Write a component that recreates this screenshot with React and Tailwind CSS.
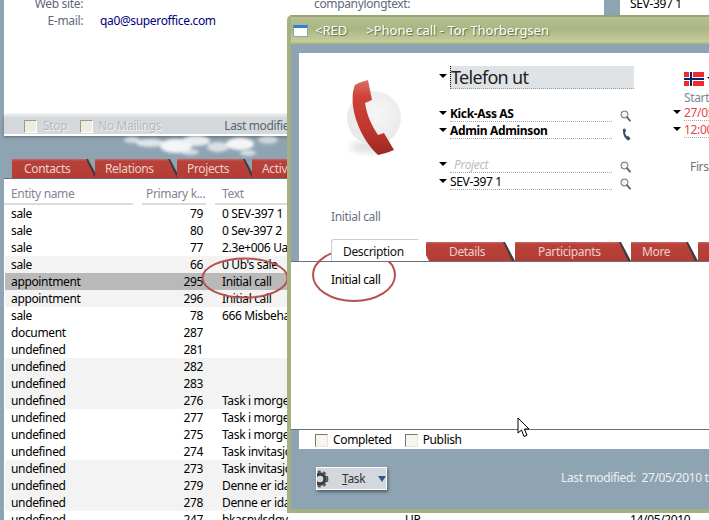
import React from "react";

const rows = [
  ["sale", "79", "0 SEV-397 1", "white"],
  ["sale", "80", "0 Sev-397 2", "white"],
  ["sale", "77", "2.3e+006 Ua", "white"],
  ["sale", "66", "0 Ub's sale", "gray"],
  ["appointment", "295", "Initial call", "sel"],
  ["appointment", "296", "Initial call", "gray"],
  ["sale", "78", "666 Misbehav", "white"],
  ["document", "287", "", "white"],
  ["undefined", "281", "", "white"],
  ["undefined", "282", "", "gray"],
  ["undefined", "283", "", "gray"],
  ["undefined", "276", "Task i morgen", "gray"],
  ["undefined", "277", "Task i morgen", "white"],
  ["undefined", "275", "Task i morgen", "white"],
  ["undefined", "274", "Task invitasjon", "white"],
  ["undefined", "273", "Task invitasjon", "gray"],
  ["undefined", "279", "Denne er ida", "gray"],
  ["undefined", "278", "Denne er ida", "gray"],
  ["undefined", "247", "bkasnylsdgv", "white", "UP", "14/05/2010"],
];

const rowBg = { white: "bg-white", gray: "bg-[#f3f3f3]", sel: "bg-[#b9b9b9]" };

// Red tab with a slanted right edge and a dark sliver behind the slant
const Tab = ({ label, width, pad, height = "h-[19px]" }) => (
  <div
    className={`${height} shrink-0 bg-[#3f3a3c] [clip-path:polygon(0_0,calc(100%-10px)_0,100%_100%,0_100%)]`}
    style={{ width }}
  >
    <div
      className="h-full bg-[linear-gradient(#c9665f,#b8423b_12%,#b43c35)] text-[#ecd0c9] text-[12px] leading-[19px] [clip-path:polygon(0_0,calc(100%-12px)_0,calc(100%-3px)_100%,0_100%)]"
      style={{ paddingLeft: pad }}
    >
      {label}
    </div>
  </div>
);

const Arrow = () => (
  <span className="shrink-0 w-0 h-0 border-x-[4px] border-x-transparent border-t-[4px] border-t-black mr-[3px] mt-[5px]" />
);

const Magnifier = () => (
  <svg width="11" height="12" viewBox="0 0 11 12" className="ml-[8px] mt-[4px] shrink-0">
    <circle cx="4.5" cy="4.5" r="3.4" fill="#f4f4f4" stroke="#8d8d8d" strokeWidth="1.2" />
    <path d="M7 7.2 L10 10.6" stroke="#6a6a6a" strokeWidth="2" strokeLinecap="round" />
  </svg>
);

const SmallPhone = () => (
  <svg width="9" height="13" viewBox="0 0 9 13" className="ml-[10px] mt-[5px] shrink-0">
    <path
      d="M1 1 L3.4 0.4 L4 3.6 L3 4.2 C3.3 6 4 7.4 5 8.4 L6.2 7.8 L8.6 10.8 L6.4 12.4 C3.6 11.6 0.4 7 1 1 Z"
      fill="#34506a"
    />
  </svg>
);

const Field = ({ children, className = "", icon }) => (
  <div className="flex items-start h-[17px]">
    <Arrow />
    <div className={`w-[162px] h-[16px] leading-[16px] text-[12px] border-b border-dotted border-[#a9a9a9] ${className}`}>
      {children}
    </div>
    {icon}
  </div>
);

const Check = ({ disabled }) => (
  <span
    className={`block w-[13px] h-[13px] border shrink-0 ${
      disabled
        ? "bg-[#eeecdf] border-t-[#9a9a90] border-l-[#9a9a90] border-r-white border-b-white"
        : "bg-[#f7f6ee] border-t-[#77776d] border-l-[#77776d] border-r-[#e5e5dc] border-b-[#e5e5dc]"
    }`}
  />
);

const Clouds = () => (
  <svg width="290" height="23" viewBox="0 0 290 23" className="block">
    <defs>
      <filter id="cloudBlur" x="-20%" y="-50%" width="140%" height="200%">
        <feGaussianBlur stdDeviation="1.6" />
      </filter>
    </defs>
    <g fill="#f3f5f6" filter="url(#cloudBlur)">
      <ellipse cx="132" cy="4" rx="8" ry="3" opacity="0.7" />
      <ellipse cx="150" cy="7" rx="14" ry="4" opacity="0.8" />
      <ellipse cx="176" cy="10" rx="16" ry="7" />
      <ellipse cx="196" cy="5" rx="14" ry="5" opacity="0.9" />
      <ellipse cx="190" cy="16" rx="9" ry="3" opacity="0.7" />
      <ellipse cx="218" cy="11" rx="11" ry="5" opacity="0.75" />
      <ellipse cx="240" cy="8" rx="14" ry="6" />
      <ellipse cx="248" cy="17" rx="8" ry="3" opacity="0.7" />
      <ellipse cx="268" cy="4" rx="10" ry="4" opacity="0.6" />
    </g>
  </svg>
);

const PhoneLogo = () => (
  <svg width="80" height="100" viewBox="0 0 80 100" className="block -ml-px">
    <defs>
      <linearGradient id="handset" x1="0" y1="0" x2="0" y2="1">
        <stop offset="0" stopColor="#dc6f66" />
        <stop offset="0.22" stopColor="#cf4238" />
        <stop offset="0.7" stopColor="#bc352d" />
        <stop offset="1" stopColor="#982824" />
      </linearGradient>
      <radialGradient id="ball" cx="0.55" cy="0.4" r="0.7">
        <stop offset="0" stopColor="#f6f6f6" />
        <stop offset="1" stopColor="#e6e6e6" />
      </radialGradient>
      <filter id="soft" x="-30%" y="-30%" width="160%" height="160%">
        <feGaussianBlur stdDeviation="3" />
      </filter>
    </defs>
    <ellipse cx="40" cy="77" rx="20" ry="6" fill="#bbb" opacity="0.45" filter="url(#soft)" />
    <circle cx="44" cy="48" r="27" fill="url(#ball)" />
    <path
      d="M25 15 C28 13 34 11 38 10 L42 30 L35 33 C37 46 42 56 48 65 L54 63 L64 80 C59 82 53 84 48 85 C38 76 28 60 24 42 C22 32 22 22 25 15 Z"
      fill="url(#handset)"
    />
  </svg>
);

const App = () => {
  return (
    <div className="relative w-[709px] h-[520px] overflow-hidden bg-[#8fa4b3] text-[12px] tracking-[-0.35px] text-black [font-family:'Noto_Sans',sans-serif]">
      {/* Main window behind the dialog */}
      <div className="flex h-[136px]">
        <div className="ml-[4px] w-[600px] flex flex-col">
          <div className="h-[115px] bg-white flex flex-col">
            <div className="flex gap-[17px] h-[17px] leading-[17px] -mt-[5px] shrink-0">
              <span className="w-[79px] text-right text-[#5f6878]">Web site:</span>
              <span className="pl-[214px] text-[#5f6878] whitespace-nowrap">companylongtext:</span>
            </div>
            <div className="flex gap-[17px] h-[17px] leading-[17px] shrink-0">
              <span className="w-[79px] text-right text-[#5f6878]">E-mail:</span>
              <span className="text-[#000080]">qa0@superoffice.com</span>
            </div>
          </div>
          <div className="h-[21px] border-t-2 border-[#e2e4e6] border-b-2 border-b-white bg-[#d3d8dc] flex items-center pt-px shadow-[0_1px_3px_#5f6b75]">
            <div className="ml-[20px]"><Check disabled /></div>
            <span className="ml-[6px] text-[#b6b9bb] [text-shadow:1px_1px_0_#f2f3f4]">Stop</span>
            <div className="ml-[13px]"><Check disabled /></div>
            <span className="ml-[5px] text-[#b6b9bb] [text-shadow:1px_1px_0_#f2f3f4]">No Mailings</span>
            <span className="ml-[63px] text-[#5b6570]">Last modified:</span>
          </div>
        </div>
        <div className="ml-[16px] flex-1 bg-white flex flex-col pl-[10px]">
          <div className="h-[17px] leading-[17px] -mt-[5px] shrink-0">SEV-397 1</div>
        </div>
      </div>

      <Clouds />

      <div className="flex ml-[12px] h-[19px]">
        <Tab label="Contacts" width={86} pad={12} />
        <div className="-ml-[3px]"><Tab label="Relations" width={85} pad={10} /></div>
        <div className="-ml-[3px]"><Tab label="Projects" width={78} pad={10} /></div>
        <div className="-ml-[3px]"><Tab label="Activities" width={90} pad={10} /></div>
      </div>

      {/* Entity list */}
      <div className="ml-[4px] bg-white border-t border-[#5f6f80] h-[400px]">
        <div className="grid grid-cols-[129px_64px_181px_216px_1fr] gap-x-[9px] h-[26px] text-[#7d8791]">
          <div className="pl-[7px] pt-[6px] border-b-2 border-[#dcdcdc]">Entity name</div>
          <div className="pl-[4px] pt-[6px] border-b-2 border-[#dcdcdc] whitespace-nowrap">Primary k...</div>
          <div className="pl-[7px] pt-[6px] border-b-2 border-[#dcdcdc]">Text</div>
        </div>
        {rows.map(([name, key, text, tone, extra, date], i) => (
          <div
            key={i}
            className={`ml-px grid grid-cols-[128px_64px_181px_216px_1fr] gap-x-[9px] h-[17px] leading-[17px] ${rowBg[tone]}`}
          >
            <div className="pl-[6px]">{name}</div>
            <div className="text-right pr-[3px]">{key}</div>
            <div className="pl-[7px] whitespace-nowrap overflow-hidden">{text}</div>
            <div>{extra}</div>
            <div>{date}</div>
          </div>
        ))}
      </div>

      {/* Highlight around the selected row */}
      <svg width="90" height="44" viewBox="0 0 90 44" className="absolute left-[200px] top-[256px]">
        <ellipse cx="45" cy="22" rx="42.5" ry="19.5" fill="none" stroke="#b5524e" strokeWidth="2" />
      </svg>

      {/* Phone call dialog */}
      <div className="absolute left-[287px] top-[15px] w-[440px] h-[498px] flex flex-col rounded-t-[5px] overflow-hidden border-x-4 border-b-4 border-[#a3b07f] border-t-2 border-t-[#97a574]">
        <div className="h-[27px] shrink-0 flex items-center pt-px bg-[linear-gradient(#b5c092,#a9b683_45%,#c4cd9b_90%,#a7b37f)] text-white [text-shadow:1px_1px_1px_#5d6a40] text-[13px] tracking-normal">
          <span className="ml-[2px] w-[15px] h-[12px] bg-white border border-[#8aa] border-t-[3px] border-t-[#2f7fd6]" />
          <span className="ml-[7px]">&lt;RED</span>
          <span className="ml-[19px]">&gt;Phone call - Tor Thorbergsen</span>
        </div>

        <div className="flex-1 flex flex-col bg-[#8fa4b3]">
          <div className="mt-[9px] ml-[8px] h-[208px] bg-white flex flex-col shrink-0">
            <div className="flex h-[186px]">
              <div className="w-[140px] shrink-0 pl-[32px] pt-[17px]">
                <PhoneLogo />
                <div className="mt-[39px] leading-[16px] text-[#6a7280]">Initial call</div>
              </div>

              <div className="w-[195px] shrink-0 pt-[13px]">
                <div className="flex items-start">
                  <span className="shrink-0 w-0 h-0 border-x-[4px] border-x-transparent border-t-[4px] border-t-black mr-[3px] mt-[8px]" />
                  <div className="w-[184px] h-[23px] bg-[#dfe3e6] border-b border-dotted border-[#9a9a9a] border-l border-l-black text-[18px] leading-[23px] tracking-[-0.7px] text-[#222]">
                    Telefon ut
                  </div>
                </div>
                <div className="mt-[17px]">
                  <Field className="font-bold" icon={<Magnifier />}>Kick-Ass AS</Field>
                  <Field className="font-bold" icon={<SmallPhone />}>Admin Adminson</Field>
                </div>
                <div className="mt-[17px]">
                  <Field className="italic text-[#bcbcbc] pl-[4px]" icon={<Magnifier />}>Project</Field>
                  <Field icon={<Magnifier />}>SEV-397 1</Field>
                </div>
              </div>

              <div className="ml-[39px] pt-[19px] w-[120px] shrink-0">
                <div className="flex ml-[11px]">
                  <svg width="20" height="14" viewBox="0 0 20 14" className="block shrink-0">
                    <rect width="20" height="14" fill="#ef2b2d" />
                    <rect x="5" width="4" height="14" fill="#fff" />
                    <rect y="5" width="20" height="4" fill="#fff" />
                    <rect x="6" width="2" height="14" fill="#002868" />
                    <rect y="6" width="20" height="2" fill="#002868" />
                  </svg>
                  <span className="ml-[3px] w-0 h-0 border-x-[4px] border-x-transparent border-t-[4px] border-t-black mt-[5px]" />
                </div>
                <div className="ml-[11px] mt-[4px] h-[15px] leading-[15px] text-[#7d8791]">Start</div>
                <div className="flex h-[17px]">
                  <Arrow />
                  <div className="text-[#e8424a] border-b border-dotted border-[#a9a9a9] h-[16px] leading-[16px] flex-1">27/05/2010</div>
                </div>
                <div className="flex h-[17px]">
                  <Arrow />
                  <div className="text-[#e8424a] border-b border-dotted border-[#a9a9a9] h-[16px] leading-[16px] flex-1">12:00</div>
                </div>
                <div className="ml-[17px] mt-[19px] text-[#6a7280]">First</div>
              </div>
            </div>

            <div className="flex items-end ml-[32px] h-[22px]">
              <div className="relative z-10 shrink-0 w-[98px] h-[22px] bg-white border-t border-l border-[#c8cdd2] rounded-tl-[3px] [clip-path:polygon(0_0,87px_0,100%_100%,0_100%)] pl-[11px] leading-[24px] text-[#111]">
                Description
              </div>
              <div className="-ml-[3px]"><Tab label="Details" width={89} pad={23} /></div>
              <div><Tab label="Participants" width={116} pad={23} /></div>
              <div><Tab label="More" width={67} pad={11} /></div>
              <div><Tab label="" width={60} pad={10} /></div>
            </div>
          </div>

          <div className="h-[168px] shrink-0 bg-white border-t border-[#66717f] pl-[40px] pt-[9px] leading-[17px]">
            Initial call
          </div>

          <div className="border-t border-[#66717f] ml-0 shrink-0">
            <div className="ml-[8px] h-[19px] bg-white flex items-center pt-px">
              <div className="ml-[16px]"><Check /></div>
              <span className="ml-[5px]">Completed</span>
              <div className="ml-[13px]"><Check /></div>
              <span className="ml-[5px]">Publish</span>
            </div>
          </div>

          <div className="flex-1 flex items-start">
            <div className="ml-[25px] mt-[18px] w-[71px] h-[23px] flex items-center border border-white bg-[#d3d8de] shadow-[1px_2px_3px_#4f5b66] text-[#333]">
              <svg width="14" height="18" viewBox="0 0 14 18" className="shrink-0">
                <circle cx="3" cy="9" r="5" fill="none" stroke="#3f3f3f" strokeWidth="3.4" />
                <circle cx="3" cy="9" r="7.4" fill="none" stroke="#555" strokeWidth="2" strokeDasharray="3 2.4" />
              </svg>
              <span className="ml-[11px]"><span className="underline">T</span>ask</span>
              <span className="ml-[13px] w-0 h-0 border-x-[4px] border-x-transparent border-t-[6px] border-t-[#3a5688]" />
            </div>
            <div className="ml-[174px] mt-[21px] leading-[16px] text-[#eef1f3] whitespace-nowrap">
              Last modified:&nbsp;&nbsp;27/05/2010 tf
            </div>
          </div>
        </div>
      </div>

      {/* Highlight around the description text */}
      <svg width="88" height="60" viewBox="0 0 88 60" className="absolute left-[311px] top-[245px]">
        <ellipse cx="43" cy="30" rx="41" ry="26" fill="none" stroke="#b5524e" strokeWidth="2" />
      </svg>

      {/* Mouse pointer */}
      <svg width="14" height="22" viewBox="0 0 14 22" className="absolute left-[517px] top-[417px]">
        <path d="M1 1 L1 16 L4.5 13 L7 19.5 L10 18.2 L7.4 12 L12 12 Z" fill="#fff" stroke="#000" strokeWidth="1" />
      </svg>
    </div>
  );
};

export default App;
